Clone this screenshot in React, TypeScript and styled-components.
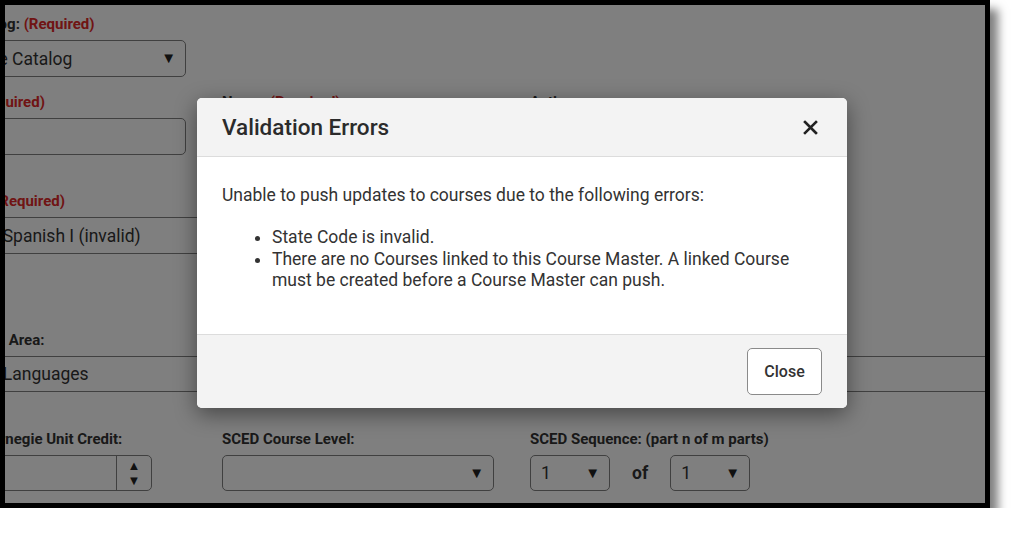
import React from "react";
import styled, { createGlobalStyle } from "styled-components";

const GlobalStyle = createGlobalStyle`
  html, body { margin: 0; padding: 0; background: #ffffff; }
  body { font-family: Roboto, "Liberation Sans", Arial, sans-serif; }
  * { box-sizing: border-box; }
`;

const Frame = styled.div`
  position: relative;
  width: 990px;
  height: 508px;
  border: 5px solid #000;
  background: #fff;
  overflow: hidden;
  box-shadow: 8px 9px 9px rgba(0, 0, 0, 0.5);
`;

const Page = styled.div`
  margin-left: -93px;
  padding-top: 11px;
  width: 1200px;
  color: #333;
`;

const Row = styled.div<{ $mt: number }>`
  display: grid;
  grid-template-columns: 274px 272px 272px;
  column-gap: 36px;
  margin-top: ${(p) => p.$mt}px;
`;

const Field = styled.div<{ $span?: number; $indent?: number }>`
  grid-column: span ${(p) => p.$span ?? 1};
  padding-left: ${(p) => p.$indent ?? 0}px;
  display: flex;
  flex-direction: column;
`;

const Label = styled.div`
  font-size: 15px;
  line-height: 16px;
  font-weight: 700;
  color: #333;
  margin-bottom: 8px;
  white-space: nowrap;
`;

const Req = styled.span`
  color: #e02828;
`;

const Box = styled.div<{ $w?: string; $h?: number; $pad?: number }>`
  width: ${(p) => p.$w ?? "100%"};
  height: ${(p) => p.$h ?? 37}px;
  border: 1px solid #808080;
  border-radius: 5px;
  display: flex;
  align-items: center;
  padding: 0 9px 0 ${(p) => p.$pad ?? 10}px;
  font-size: 17.5px;
  color: #333;
  white-space: nowrap;
  overflow: hidden;
`;

const Value = styled.span`
  flex: 1;
`;

const Caret = styled.span`
  font-size: 15px;
  line-height: 15px;
  color: #222;
`;

const Spinner = styled.div`
  align-self: stretch;
  width: 35px;
  margin-right: -9px;
  border-left: 1px solid #808080;
  display: flex;
  flex-direction: column;
  align-items: center;
  justify-content: center;
  gap: 5px;
  font-size: 13px;
  line-height: 10px;
  color: #222;
`;

const SeqWrap = styled.div`
  display: flex;
  align-items: center;
  gap: 22px;
`;

const Of = styled.span`
  font-size: 17.5px;
  font-weight: 700;
  color: #333;
`;

const Overlay = styled.div`
  position: absolute;
  inset: 0;
  background: rgba(0, 0, 0, 0.5);
`;

const Modal = styled.div`
  position: absolute;
  left: 192px;
  top: 93px;
  width: 650px;
  height: 310px;
  background: #fff;
  border-radius: 5px;
  overflow: hidden;
  display: flex;
  flex-direction: column;
  box-shadow: 0 6px 22px rgba(0, 0, 0, 0.45);
`;

const Header = styled.div`
  height: 59px;
  flex: none;
  background: #f3f3f3;
  border-bottom: 1px solid #dcdcdc;
  display: flex;
  align-items: center;
  justify-content: space-between;
  padding: 0 29px 0 25px;
`;

const Title = styled.h2`
  margin: 0;
  font-size: 22.5px;
  font-weight: 500;
  color: #2b2b2b;
`;

const CloseX = styled.button`
  border: 0;
  background: transparent;
  padding: 0;
  width: 15px;
  height: 15px;
  display: flex;
  cursor: pointer;
`;

const Body = styled.div`
  flex: 1;
  padding: 27px 25px 0 25px;
  font-size: 17.5px;
  line-height: 22px;
  color: #333;
`;

const Para = styled.p`
  margin: 0;
`;

const List = styled.ul`
  margin: 21px 0 0 0;
  padding-left: 50px;
  line-height: 21.5px;
`;

const Footer = styled.div`
  height: 74px;
  flex: none;
  background: #f3f3f3;
  border-top: 1px solid #dcdcdc;
  display: flex;
  align-items: flex-start;
  justify-content: flex-end;
  padding: 13px 25px 0 0;
`;

const Button = styled.button`
  width: 75px;
  height: 47px;
  background: #fff;
  border: 1px solid #8a8a8a;
  border-radius: 5px;
  font-family: Roboto, "Liberation Sans", Arial, sans-serif;
  font-size: 16px;
  font-weight: 500;
  color: #333;
  cursor: pointer;
`;

export default function App() {
  return (
    <>
      <GlobalStyle />
      <Frame>
        <Page>
          <Row $mt={0}>
            <Field>
              <Label>
                Course Catalog: <Req>(Required)</Req>
              </Label>
              <Box $pad={9}>
                <Value>Old Course Catalog</Value>
                <Caret>▼</Caret>
              </Box>
            </Field>
          </Row>
          <Row $mt={17}>
            <Field>
              <Label>
                Number: <Req>(Required)</Req>
              </Label>
              <Box />
            </Field>
            <Field>
              <Label>
                Name: <Req>(Required)</Req>
              </Label>
              <Box />
            </Field>
            <Field>
              <Label>Active:</Label>
              <Box />
            </Field>
          </Row>
          <Row $mt={38}>
            <Field $span={2}>
              <Label>
                State Code: <Req>(Required)</Req>
              </Label>
              <Box $pad={27}>
                <Value>24052 - Spanish I (invalid)</Value>
              </Box>
            </Field>
          </Row>
          <Row $mt={78}>
            <Field $span={3} $indent={1}>
              <Label>SCED Subject Area:</Label>
              <Box $w="1300px" $h={36} $pad={6}>
                <Value>24 - World Languages</Value>
              </Box>
            </Field>
          </Row>
          <Row $mt={39}>
            <Field $indent={70}>
              <Label>Carnegie Unit Credit:</Label>
              <Box $w="170px" $h={36}>
                <Value />
                <Spinner>
                  <span>▲</span>
                  <span>▼</span>
                </Spinner>
              </Box>
            </Field>
            <Field>
              <Label>SCED Course Level:</Label>
              <Box $h={36}>
                <Value />
                <Caret>▼</Caret>
              </Box>
            </Field>
            <Field>
              <Label>SCED Sequence: (part n of m parts)</Label>
              <SeqWrap>
                <Box $w="80px" $h={36}>
                  <Value>1</Value>
                  <Caret>▼</Caret>
                </Box>
                <Of>of</Of>
                <Box $w="80px" $h={36}>
                  <Value>1</Value>
                  <Caret>▼</Caret>
                </Box>
              </SeqWrap>
            </Field>
          </Row>
        </Page>
        <Overlay />
        <Modal role="dialog" aria-label="Validation Errors">
          <Header>
            <Title>Validation Errors</Title>
            <CloseX aria-label="Close">
              <svg width="15" height="15" viewBox="0 0 15 15">
                <path d="M2 2 L13 13 M13 2 L2 13" stroke="#222" strokeWidth="2.6" strokeLinecap="square" />
              </svg>
            </CloseX>
          </Header>
          <Body>
            <Para>Unable to push updates to courses due to the following errors:</Para>
            <List>
              <li>State Code is invalid.</li>
              <li>
                There are no Courses linked to this Course Master. A linked Course must be created before a Course
                Master can push.
              </li>
            </List>
          </Body>
          <Footer>
            <Button>Close</Button>
          </Footer>
        </Modal>
      </Frame>
    </>
  );
}
